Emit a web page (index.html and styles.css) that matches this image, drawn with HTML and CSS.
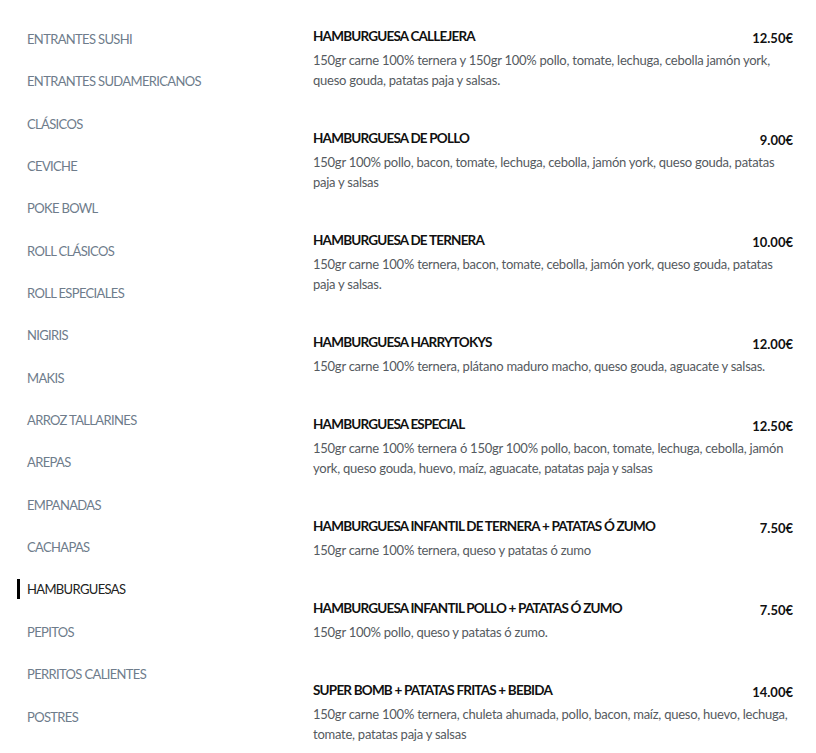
FILE: index.html
```html
<!DOCTYPE html>
<html lang="es">
<head>
<meta charset="utf-8">
<link rel="stylesheet" href="styles.css">
</head>
<body>
<div class="page">
  <nav class="sidebar">
    <ul class="cats">
      <li>ENTRANTES SUSHI</li>
      <li>ENTRANTES SUDAMERICANOS</li>
      <li>CLÁSICOS</li>
      <li>CEVICHE</li>
      <li>POKE BOWL</li>
      <li>ROLL CLÁSICOS</li>
      <li>ROLL ESPECIALES</li>
      <li>NIGIRIS</li>
      <li>MAKIS</li>
      <li>ARROZ TALLARINES</li>
      <li>AREPAS</li>
      <li>EMPANADAS</li>
      <li>CACHAPAS</li>
      <li class="active">HAMBURGUESAS</li>
      <li>PEPITOS</li>
      <li>PERRITOS CALIENTES</li>
      <li>POSTRES</li>
    </ul>
  </nav>
  <main class="menu">
    <div class="item">
      <div class="head"><h3>HAMBURGUESA CALLEJERA</h3><span class="price">12.50€</span></div>
      <p>150gr carne 100% ternera y 150gr 100% pollo, tomate, lechuga, cebolla jamón york, queso gouda, patatas paja y salsas.</p>
    </div>
    <div class="item">
      <div class="head"><h3>HAMBURGUESA DE POLLO</h3><span class="price">9.00€</span></div>
      <p>150gr 100% pollo, bacon, tomate, lechuga, cebolla, jamón york, queso gouda, patatas paja y salsas</p>
    </div>
    <div class="item">
      <div class="head"><h3>HAMBURGUESA DE TERNERA</h3><span class="price">10.00€</span></div>
      <p>150gr carne 100% ternera, bacon, tomate, cebolla, jamón york, queso gouda, patatas paja y salsas.</p>
    </div>
    <div class="item">
      <div class="head"><h3>HAMBURGUESA HARRYTOKYS</h3><span class="price">12.00€</span></div>
      <p>150gr carne 100% ternera, plátano maduro macho, queso gouda, aguacate y salsas.</p>
    </div>
    <div class="item">
      <div class="head"><h3>HAMBURGUESA ESPECIAL</h3><span class="price">12.50€</span></div>
      <p>150gr carne 100% ternera ó 150gr 100% pollo, bacon, tomate, lechuga, cebolla, jamón york, queso gouda, huevo, maíz, aguacate, patatas paja y salsas</p>
    </div>
    <div class="item">
      <div class="head"><h3>HAMBURGUESA INFANTIL DE TERNERA + PATATAS Ó ZUMO</h3><span class="price">7.50€</span></div>
      <p>150gr carne 100% ternera, queso y patatas ó zumo</p>
    </div>
    <div class="item">
      <div class="head"><h3>HAMBURGUESA INFANTIL POLLO + PATATAS Ó ZUMO</h3><span class="price">7.50€</span></div>
      <p>150gr 100% pollo, queso y patatas ó zumo.</p>
    </div>
    <div class="item">
      <div class="head"><h3>SUPER BOMB + PATATAS FRITAS + BEBIDA</h3><span class="price">14.00€</span></div>
      <p>150gr carne 100% ternera, chuleta ahumada, pollo, bacon, maíz, queso, huevo, lechuga, tomate, patatas paja y salsas</p>
    </div>
  </main>
</div>
</body>
</html>
```

FILE: styles.css
```css
html, body {
  margin: 0;
  padding: 0;
  background: #ffffff;
}
body {
  font-family: Lato, "Open Sans", sans-serif;
  overflow: hidden;
}
.page {
  display: grid;
  grid-template-columns: 313px 480px;
  height: 753px;
}
.sidebar {
  padding-top: 18px;
}
.cats {
  list-style: none;
  margin: 0;
  padding: 0 0 0 17px;
}
.cats li {
  height: 42.35px;
  line-height: 42.35px;
  font-size: 13px;
  color: #6e7c8b;
  letter-spacing: -0.65px;
  padding-left: 10px;
  position: relative;
}
.cats li.active {
  color: #222222;
}
.cats li.active::before {
  content: "";
  position: absolute;
  left: 0;
  top: 11px;
  width: 3px;
  height: 20px;
  background: #000000;
}
.menu {
  padding-top: 26px;
}
.item {
  margin-bottom: 38px;
}
.head {
  display: flex;
  justify-content: space-between;
  align-items: flex-start;
  height: 20px;
}
.head h3 {
  margin: 0;
  font-size: 13.5px;
  line-height: 20px;
  font-weight: 700;
  color: #111111;
  letter-spacing: -0.8px;
}
.price {
  font-size: 13px;
  font-weight: 700;
  color: #111111;
  line-height: 20px;
  margin-top: 2px;
}
.item p {
  margin: 4px 0 0 0;
  font-size: 13px;
  line-height: 20px;
  color: #555a60;
  letter-spacing: -0.25px;
}
```
